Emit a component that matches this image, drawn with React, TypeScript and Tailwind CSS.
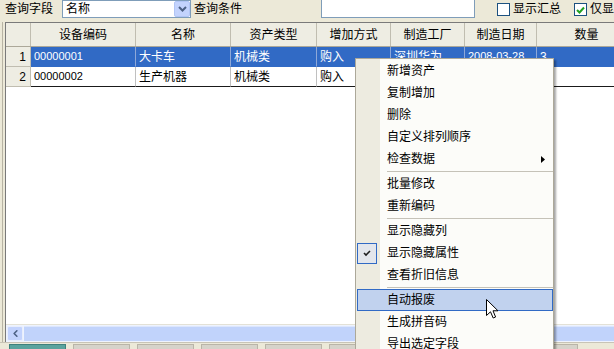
import { ChevronLeft } from 'lucide-react'

const columns = [
  { title: '设备编码', w: 'w-[105px]' },
  { title: '名称', w: 'w-[95px]' },
  { title: '资产类型', w: 'w-[86px]' },
  { title: '增加方式', w: 'w-[74px]' },
  { title: '制造工厂', w: 'w-[74px]' },
  { title: '制造日期', w: 'w-[72px]' },
  { title: '数量', w: 'w-[100px]' },
]

const rows = [
  ['00000001', '大卡车', '机械类', '购入', '深圳华为', '2008-03-28', '3'],
  ['00000002', '生产机器', '机械类', '购入', '深圳华为', '2008-03-28', '1'],
]

type MenuItem = { t?: string; sep?: boolean; sub?: boolean; checked?: boolean; active?: boolean }

const menu: MenuItem[] = [
  { t: '新增资产' },
  { t: '复制增加' },
  { t: '删除' },
  { t: '自定义排列顺序' },
  { t: '检查数据', sub: true },
  { sep: true },
  { t: '批量修改' },
  { t: '重新编码' },
  { sep: true },
  { t: '显示隐藏列' },
  { t: '显示隐藏属性', checked: true },
  { t: '查看折旧信息' },
  { sep: true },
  { t: '自动报废', active: true },
  { t: '生成拼音码' },
  { t: '导出选定字段' },
]

const tabs = [
  'bg-[#5AA39E] border-[#3F817D]',
  'bg-[#D6D3CA] border-[#B9B5A8]',
  'bg-[#D6D3CA] border-[#B9B5A8]',
  'bg-[#D6D3CA] border-[#B9B5A8]',
  'bg-[#D6D3CA] border-[#B9B5A8]',
  'bg-[#D6D3CA] border-[#B9B5A8]',
  'bg-[#D6D3CA] border-[#B9B5A8]',
  'bg-[#D6D3CA] border-[#B9B5A8]',
  'bg-[#D6D3CA] border-[#B9B5A8]',
]

export default function App() {
  return (
    <div className="w-[614px] h-[349px] bg-[#ECE9D8] relative overflow-hidden flex flex-col text-[12px] text-black font-['Liberation_Sans','Noto_Sans_CJK_SC',sans-serif] leading-none">
      {/* Query bar */}
      <div className="h-[22px] flex items-start shrink-0 whitespace-nowrap">
        <span className="ml-[5px] mt-[3px] shrink-0">查询字段</span>
        <div className="ml-[9px] w-[129px] h-[18px] shrink-0 bg-white border border-[#7F9DB9] flex items-center">
          <span className="ml-[3px] flex-1">名称</span>
          <div className="w-[16px] h-[16px] bg-[#C3D3FD] border border-[#B1C5F5] rounded-[2px] flex items-center justify-center">
            <svg width="9" height="6" viewBox="0 0 9 6">
              <path d="M1 1 L4.5 4.5 L8 1" stroke="#4D6185" strokeWidth="2" fill="none" />
            </svg>
          </div>
        </div>
        <span className="ml-[3px] mt-[3px] shrink-0">查询条件</span>
        <div className="ml-[79px] w-[154px] h-[19px] -mt-[1px] shrink-0 bg-white border border-[#7F9DB9]" />
        <div className="ml-[22px] mt-[3px] w-[13px] h-[13px] shrink-0 bg-white border border-[#1C5180]" />
        <span className="ml-[3px] mt-[3px] shrink-0">显示汇总</span>
        <div className="ml-[13px] mt-[3px] w-[13px] h-[13px] shrink-0 bg-white border border-[#1C5180] flex items-center justify-center">
          <svg width="9" height="8" viewBox="0 0 9 8">
            <path d="M1 4 L3.5 6.5 L8 1.5" stroke="#21A121" strokeWidth="2" fill="none" />
          </svg>
        </div>
        <span className="ml-[3px] mt-[3px] shrink-0">仅显</span>
      </div>

      {/* Grid */}
      <div className="ml-[2px] border-l border-[#B8B4A4] pl-[2px] h-[320px] shrink-0">
        <div className="h-full border-l border-t border-[#7A7A7A] bg-white flex flex-col overflow-hidden">
          <div className="flex h-[24px] shrink-0 bg-[#EEEDE3] border-b border-[#ACA899]">
            <div className="w-[25px] shrink-0 border-r border-[#C0BDB0]" />
            {columns.map((c) => (
              <div key={c.title} className={`${c.w} shrink-0 border-r border-[#C0BDB0] flex items-center justify-center whitespace-nowrap`}>
                {c.title}
              </div>
            ))}
          </div>
          {rows.map((r, i) => (
            <div key={i} className="flex h-[20px] shrink-0">
              <div className="w-[25px] shrink-0 bg-[#EEEDE3] border-r border-b border-[#C0BDB0] flex items-center justify-end pr-[4px]">
                {i + 1}
              </div>
              {r.map((v, j) => (
                <div
                  key={j}
                  className={`${columns[j].w} shrink-0 flex items-center pl-[3px] whitespace-nowrap overflow-hidden ${
                    i === 0
                      ? 'bg-[#316AC5] text-white border-r border-b border-r-[#8EA8D8] border-b-[#316AC5]'
                      : 'bg-white border-r border-r-[#C0C0C0] border-b border-b-[#1A1A1A]'
                  } ${j === 0 || j === 5 ? 'text-[11px]' : ''}`}
                >
                  {v}
                </div>
              ))}
            </div>
          ))}
          <div className="flex-1 bg-white border-b border-[#E3E1D6]" />
          {/* Horizontal scrollbar */}
          <div className="h-[17px] shrink-0 flex bg-[#EEF3FE]">
            <div className="ml-[1px] mt-[1px] w-[16px] h-[15px] bg-[#C3D3FD] border border-[#E8EEFD] rounded-[2px] flex items-center justify-center">
              <ChevronLeft size={11} strokeWidth={3.5} className="text-[#4D6185]" />
            </div>
            <div className="ml-[1px] mt-[1px] flex-1 h-[15px] bg-[#C1D3FB] border-t border-[#DCE6FD]" />
          </div>
        </div>
      </div>

      {/* Sheet tabs */}
      <div className="flex-1 border-t border-[#C8C4B6] flex gap-[7px] pl-[9px] pt-[1px]">
        {tabs.map((t, i) => (
          <div key={i} className={`w-[57px] h-[12px] shrink-0 border ${t}`} />
        ))}
      </div>

      {/* Context menu */}
      <div className="absolute left-[355px] top-[58px] w-[199px] border border-[#ACA899] pt-[1px] bg-[linear-gradient(to_right,#EDEBE0_24px,#FCFCF9_24px)] shadow-[2px_2px_2px_rgba(0,0,0,0.35)]">
        {menu.map((m, i) =>
          m.sep ? (
            <div key={i} className="h-[3px] flex items-center pl-[31px]">
              <div className="h-px w-full bg-[#C5C2B8]" />
            </div>
          ) : m.active ? (
            <div key={i} className="h-[22px] ml-[1px] border border-[#316AC5] bg-[#C1D2EE] flex items-center pl-[29px]">
              {m.t}
            </div>
          ) : (
            <div key={i} className="h-[22px] flex items-center">
              <div className="w-[31px] h-full flex items-center shrink-0">
                {m.checked && (
                  <div className="ml-[1px] w-[20px] h-[21px] border border-[#316AC5] bg-[#E3E6EC] flex items-center justify-center">
                    <svg width="8" height="7" viewBox="0 0 8 7">
                      <path d="M1 3 L3 5 L7 1" stroke="#1E1E1E" strokeWidth="1.6" fill="none" />
                    </svg>
                  </div>
                )}
              </div>
              <span className="flex-1">{m.t}</span>
              {m.sub && (
                <svg width="4" height="7" viewBox="0 0 4 7" className="mr-[8px]">
                  <path d="M0 0 L4 3.5 L0 7 Z" fill="#000" />
                </svg>
              )}
            </div>
          )
        )}
      </div>

      {/* Mouse pointer */}
      <svg width="13" height="21" viewBox="0 0 13 21" className="absolute left-[486px] top-[299px]">
        <path d="M0.5 0.5 L0.5 16.5 L4.5 12.8 L7.2 19 L9.6 18 L7 11.8 L12 11.8 Z" fill="#fff" stroke="#000" strokeWidth="1" />
      </svg>
    </div>
  )
}
